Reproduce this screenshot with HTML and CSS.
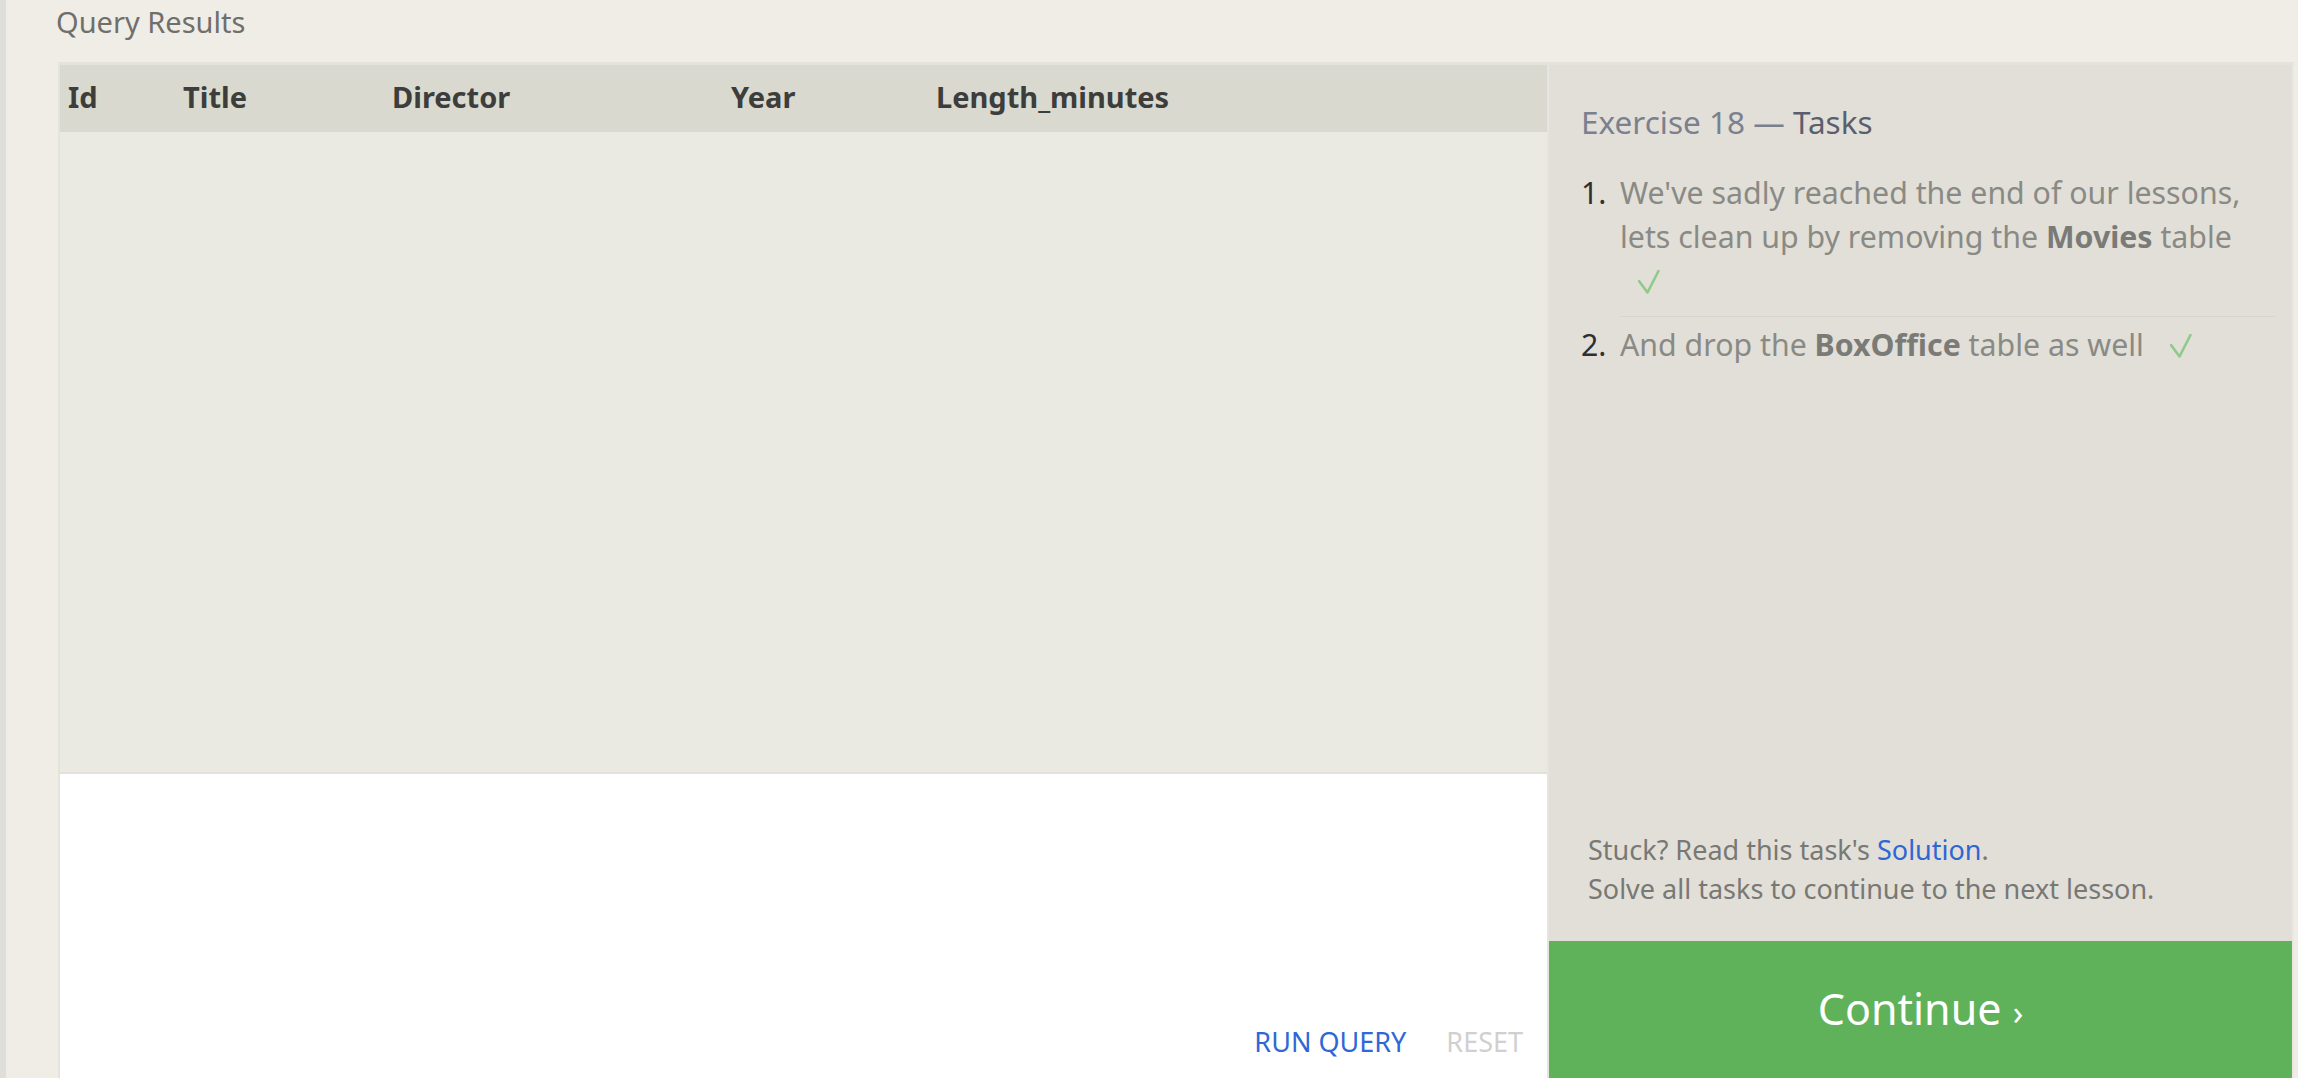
FILE: index.html
```html
<!DOCTYPE html>
<html lang="en">
<head>
<meta charset="utf-8">
<title>SQL Lesson – Query Results</title>
<link rel="stylesheet" href="styles.css">
</head>
<body>
  <h2 class="results-title">Query Results</h2>
  <div class="workspace">
    <section class="results">
      <div class="table-head">
        <div class="col">Id</div>
        <div class="col">Title</div>
        <div class="col">Director</div>
        <div class="col">Year</div>
        <div class="col">Length_minutes</div>
      </div>
      <div class="table-body"></div>
      <div class="editor">
        <span class="btn btn-run">RUN QUERY</span>
        <span class="btn btn-reset">RESET</span>
      </div>
    </section>
    <aside class="panel">
      <h3 class="panel-title">Exercise 18 — <span class="panel-title-strong">Tasks</span></h3>
      <ol class="tasks">
        <li class="task">
          <span class="task-num">1.</span>
          <span class="task-text task-text-sep">We've sadly reached the end of our lessons, lets clean up by removing the <b>Movies</b> table <span class="check"><svg width="22" height="24" viewBox="0 0 22 24"><polyline points="1,11 9.5,22.5 20.5,1" fill="none" stroke="#8fca8a" stroke-width="2.6" stroke-linecap="round" stroke-linejoin="round"/></svg></span></span>
        </li>
        <li class="task task-second">
          <span class="task-num">2.</span>
          <span class="task-text">And drop the <b>BoxOffice</b> table as well <span class="check"><svg width="22" height="24" viewBox="0 0 22 24"><polyline points="1,11 9.5,22.5 20.5,1" fill="none" stroke="#8fca8a" stroke-width="2.6" stroke-linecap="round" stroke-linejoin="round"/></svg></span></span>
        </li>
      </ol>
      <div class="stuck">
        <div>Stuck? Read this task's <a class="solution" href="#">Solution</a>.</div>
        <div>Solve all tasks to continue to the next lesson.</div>
      </div>
      <div class="continue">Continue <span class="chev">›</span></div>
    </aside>
  </div>
</body>
</html>
```
FILE: styles.css
```css
html, body {
  margin: 0;
  height: 100%;
  overflow: hidden;
}

body {
  background: #efede6;
  border-left: 6px solid #e0dedb;
  box-sizing: border-box;
  font-family: "Noto Sans", "Open Sans", sans-serif;
}

.results-title {
  margin: 0;
  height: 62px;
  box-sizing: border-box;
  padding: 2px 0 0 50px;
  font-size: 29px;
  line-height: 40px;
  font-weight: 400;
  color: #6f6f6c;
}

.workspace {
  display: flex;
  height: 1013px;
  margin: 0 4px 0 52px;
  border-top: 3px solid #e3e2dc;
}

.results {
  width: 1489px;
  box-sizing: border-box;
  border-left: 2px solid #e4e3dc;
  display: flex;
  flex-direction: column;
}

.table-head {
  height: 67px;
  flex: none;
  box-sizing: border-box;
  padding-bottom: 3px;
  display: grid;
  grid-template-columns: 115px 209px 339px 205px 1fr;
  align-items: center;
  background: #d9d9d0;
  font-size: 29px;
  line-height: 40px;
  font-weight: 700;
  color: #3d3d3b;
}

.col {
  padding-left: 8px;
}

.table-body {
  height: 640px;
  flex: none;
  background: #eaeae2;
  border-bottom: 2px solid #e2e1da;
}

.editor {
  flex: 1;
  background: #ffffff;
  display: flex;
  justify-content: flex-end;
  align-items: flex-end;
  gap: 40px;
  padding: 0 24px 16px 0;
}

.btn {
  font-size: 27px;
  line-height: 40px;
}

.btn-run {
  color: #2e68d6;
}

.btn-reset {
  color: #d0d0cf;
}

.panel {
  flex: 1;
  box-sizing: border-box;
  border-left: 2px solid #e5e4de;
  border-right: 2px solid #e9e8e2;
  background: #e1dfd8;
  display: flex;
  flex-direction: column;
}

.panel-title {
  margin: 0;
  padding: 35px 0 0 32px;
  font-size: 31.5px;
  line-height: 44px;
  font-weight: 400;
  color: #7b808f;
}

.panel-title-strong {
  color: #5a5f6f;
}

.tasks {
  list-style: none;
  margin: 27px 17px 0 32px;
  padding: 0;
}

.task {
  display: flex;
  font-size: 30.3px;
  line-height: 44px;
  color: #8a8a85;
}

.task-num {
  width: 39px;
  flex: none;
  color: #2f2f2f;
}

.task-text {
  flex: 1;
}

.task-text b {
  color: #7a7a76;
}

.task-text-sep {
  padding-bottom: 13px;
  border-bottom: 1px solid #d6d5ce;
}

.task-second {
  padding-top: 6px;
}

.check {
  display: inline-block;
  margin-left: 18px;
  padding-right: 12px;
  width: 22px;
  height: 24px;
  vertical-align: -2px;
}

.check svg {
  display: block;
}

.stuck {
  margin-top: auto;
  padding: 0 0 33px 39px;
  font-size: 27px;
  line-height: 39px;
  color: #787874;
}

.solution {
  color: #2f66d4;
  text-decoration: none;
}

.continue {
  height: 137px;
  flex: none;
  box-sizing: border-box;
  padding-top: 38px;
  background: #5fb25a;
  color: #ffffff;
  text-align: center;
  font-size: 43px;
  line-height: 60px;
}

.chev {
  font-size: 34px;
}
```
